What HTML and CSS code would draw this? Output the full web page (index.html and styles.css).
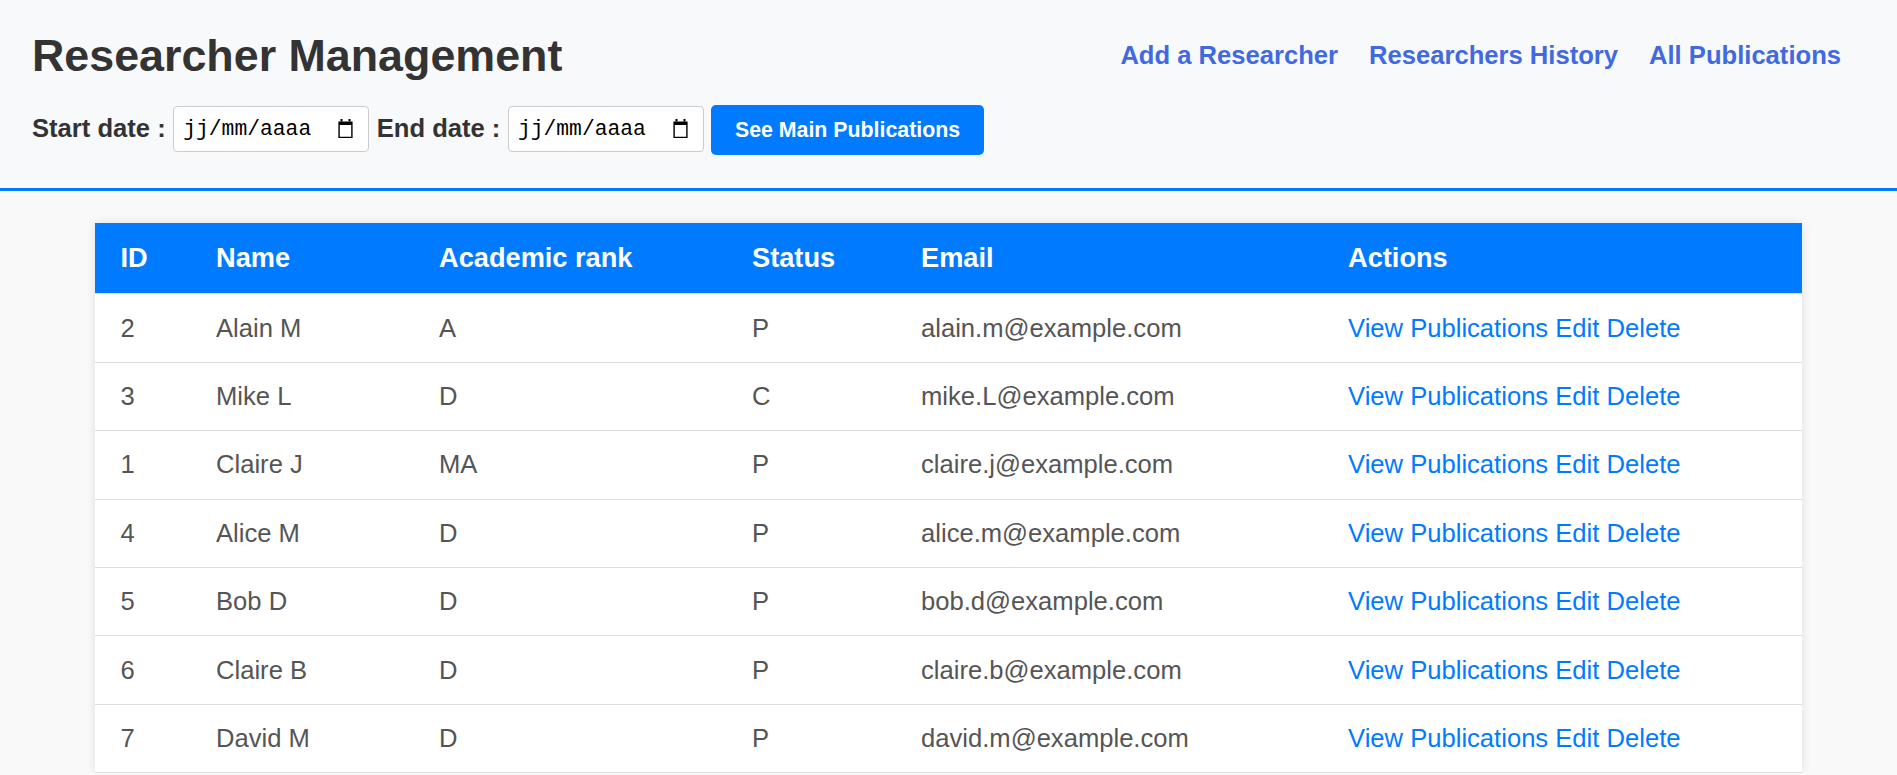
FILE: index.html
```html
<!DOCTYPE html>
<html lang="en">
<head>
<meta charset="utf-8">
<title>Researcher Management</title>
<link rel="stylesheet" href="styles.css">
</head>
<body>
<header class="top">
  <div class="top-row">
    <h1 class="title">Researcher Management</h1>
    <nav class="nav">
      <a href="#" class="nav-link">Add a Researcher</a>
      <a href="#" class="nav-link">Researchers History</a>
      <a href="#" class="nav-link">All Publications</a>
    </nav>
  </div>
  <form class="filter">
    <label class="filter-label">Start date :</label>
    <div class="date-input">
      <span class="date-text">jj/mm/aaaa</span>
      <svg class="cal" width="15" height="19" viewBox="0 0 15 19"><path d="M2.5 0h2v2.6h-2z M10.5 0h2v2.6h-2z"/><path fill-rule="evenodd" d="M0.4 2.5h14.2v16.5H0.4z M1.8 6h11.4v11.7H1.8z"/></svg>
    </div>
    <label class="filter-label">End date :</label>
    <div class="date-input">
      <span class="date-text">jj/mm/aaaa</span>
      <svg class="cal" width="15" height="19" viewBox="0 0 15 19"><path d="M2.5 0h2v2.6h-2z M10.5 0h2v2.6h-2z"/><path fill-rule="evenodd" d="M0.4 2.5h14.2v16.5H0.4z M1.8 6h11.4v11.7H1.8z"/></svg>
    </div>
    <button type="button" class="btn">See Main Publications</button>
  </form>
</header>
<main>
  <table class="grid">
    <colgroup>
      <col class="c-id"><col class="c-name"><col class="c-rank"><col class="c-status"><col class="c-email"><col>
    </colgroup>
    <thead>
      <tr><th>ID</th><th>Name</th><th>Academic rank</th><th>Status</th><th>Email</th><th>Actions</th></tr>
    </thead>
    <tbody>
      <tr><td>2</td><td>Alain M</td><td>A</td><td>P</td><td>alain.m@example.com</td><td><a href="#">View Publications</a> <a href="#">Edit</a> <a href="#">Delete</a></td></tr>
      <tr><td>3</td><td>Mike L</td><td>D</td><td>C</td><td>mike.L@example.com</td><td><a href="#">View Publications</a> <a href="#">Edit</a> <a href="#">Delete</a></td></tr>
      <tr><td>1</td><td>Claire J</td><td>MA</td><td>P</td><td>claire.j@example.com</td><td><a href="#">View Publications</a> <a href="#">Edit</a> <a href="#">Delete</a></td></tr>
      <tr><td>4</td><td>Alice M</td><td>D</td><td>P</td><td>alice.m@example.com</td><td><a href="#">View Publications</a> <a href="#">Edit</a> <a href="#">Delete</a></td></tr>
      <tr><td>5</td><td>Bob D</td><td>D</td><td>P</td><td>bob.d@example.com</td><td><a href="#">View Publications</a> <a href="#">Edit</a> <a href="#">Delete</a></td></tr>
      <tr><td>6</td><td>Claire B</td><td>D</td><td>P</td><td>claire.b@example.com</td><td><a href="#">View Publications</a> <a href="#">Edit</a> <a href="#">Delete</a></td></tr>
      <tr><td>7</td><td>David M</td><td>D</td><td>P</td><td>david.m@example.com</td><td><a href="#">View Publications</a> <a href="#">Edit</a> <a href="#">Delete</a></td></tr>
    </tbody>
  </table>
</main>
</body>
</html>
```
FILE: styles.css
```css
html, body {
  margin: 0;
  padding: 0;
}
body {
  background: #f9f9f9;
  font-family: "Liberation Sans", Arial, sans-serif;
  color: #333;
}
.top {
  background: #f8f9fa;
  padding: 30px 56px 32.7px 32px;
  border-bottom: 3px solid #007bff;
}
.top-row {
  display: flex;
  justify-content: space-between;
  align-items: center;
}
.title {
  margin: 0;
  font-size: 44.8px;
  font-weight: bold;
  color: #333;
  line-height: normal;
}
.nav {
  display: flex;
  gap: 31px;
}
.nav-link {
  color: #4169e1;
  font-weight: bold;
  font-size: 25.6px;
  text-decoration: none;
}
.filter {
  display: flex;
  align-items: baseline;
  gap: 7.5px;
  margin-top: 23.8px;
}
.filter-label {
  font-size: 25.6px;
  font-weight: bold;
  color: #333;
}
.date-input {
  box-sizing: border-box;
  width: 196px;
  height: 46px;
  display: flex;
  align-items: center;
  justify-content: space-between;
  padding: 0 15px 0 9px;
  background: #fff;
  border: 1px solid #cccccc;
  border-radius: 4px;
  position: relative;
  top: -2px;
}
.date-text {
  font-family: "Liberation Mono", "DejaVu Sans Mono", monospace;
  font-size: 21.33px;
  color: #000;
}
.cal {
  fill: #000;
  flex: none;
}
.btn {
  font-family: "Liberation Sans", Arial, sans-serif;
  font-size: 21.33px;
  font-weight: bold;
  color: #fff;
  background: #007bff;
  border: none;
  border-radius: 5px;
  padding: 12.8px 23.5px;
  line-height: normal;
}
.grid {
  width: 90%;
  margin: 32px auto 0;
  border-collapse: collapse;
  table-layout: fixed;
  background: #fff;
  box-shadow: 0 0 10px rgba(0, 0, 0, 0.1);
}
.c-id { width: 95.6px; }
.c-name { width: 223px; }
.c-rank { width: 313px; }
.c-status { width: 169px; }
.c-email { width: 427px; }
.grid th, .grid td {
  text-align: left;
  padding: 19.2px 25.6px;
  border-bottom: 1px solid #ddd;
  line-height: normal;
}
.grid th {
  background: #007bff;
  color: #fff;
  font-weight: bold;
  font-size: 27.2px;
}
.grid td {
  font-size: 25.6px;
  color: #555;
}
.grid td a {
  color: #007bff;
  text-decoration: none;
}
```
